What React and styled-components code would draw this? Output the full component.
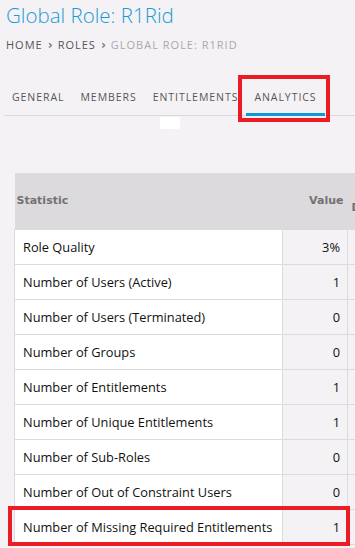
import React from 'react'
import styled, { createGlobalStyle } from 'styled-components'

const GlobalStyle = createGlobalStyle`
    html, body {
        margin: 0;
        padding: 0;
        background-color: #f5f2f5;
        overflow: hidden;
    }
    body {
        font-family: "Open Sans", "Liberation Sans", sans-serif;
    }
`;

const Page = styled.div`
    width: 355px;
    height: 548px;
    padding: 0 0 0 4px;
    box-sizing: border-box;
    overflow: hidden;
    background-color: #f5f2f5;
`;

const Title = styled.h1`
    margin: 0;
    padding: 0 0 0 2px;
    font-size: 20.5px;
    font-weight: 300;
    line-height: 30px;
    color: #1a9ad6;
`;

const Crumbs = styled.div`
    display: flex;
    align-items: center;
    gap: 5px;
    margin: 7px 0 0 2px;
    font-size: 11px;
    letter-spacing: 1px;
    line-height: 16px;
    text-transform: uppercase;
`;

const Crumb = styled.span`
    color: ${p => (p.$current ? '#aaa8aa' : '#555')};
`;

const Chevron = styled.span`
    color: #777;
    font-family: "DejaVu Sans", sans-serif;
    font-weight: 700;
    font-size: 12px;
    letter-spacing: 0;
`;

const Tabs = styled.div`
    display: flex;
    margin-top: 25px;
    border-bottom: 1px solid #dcd8dc;
`;

const Tab = styled.div`
    position: relative;
    padding: 3px 8px 0;
    height: 38px;
    display: flex;
    align-items: center;
    font-size: 10.5px;
    letter-spacing: 0.95px;
    color: #555;
    text-transform: uppercase;
    border-bottom: 3px solid ${p => (p.$active ? '#0f98d8' : 'transparent')};
    margin-bottom: -1px;
    box-sizing: border-box;
`;

const TabMark = styled.div`
    position: absolute;
    left: -8px;
    right: -5px;
    top: -3px;
    bottom: -9px;
    border: 4px solid #ec1c24;
`;

const Blob = styled.div`
    width: 20px;
    height: 12px;
    margin: 1px 0 0 156px;
    background: #fff;
    border-radius: 2px;
`;

const TableWrap = styled.div`
    position: relative;
    margin: 44px 0 0 10px;
`;

const Table = styled.table`
    border-collapse: collapse;
    width: 460px;
    table-layout: fixed;
    font-size: 12.8px;
    color: #111;
`;

const HeadRow = styled.tr`
    height: 56px;
`;

const Head = styled.th`
    padding: ${p => (p.$low ? '14px 4px 0' : p.$right ? '0 4px' : '0 2px')};
    background-color: #dcdadc;
    color: #737173;
    font-family: "DejaVu Sans", Verdana, sans-serif;
    font-size: 11px;
    font-weight: 700;
    text-align: ${p => (p.$right ? 'right' : 'left')};
    vertical-align: middle;
    white-space: nowrap;
`;

const Cell = styled.td`
    height: 34px;
    padding: 0 ${p => (p.$right ? '7px' : '8px')};
    border: 1px solid #dddadd;
    background-color: ${p => (p.$shade ? '#f5f2f5' : '#fff')};
    text-align: ${p => (p.$right ? 'right' : 'left')};
    white-space: nowrap;
`;

const RowMark = styled.div`
    position: absolute;
    left: -6px;
    top: 333px;
    width: 342px;
    height: 40px;
    border: 4px solid #ec1c24;
    box-sizing: border-box;
    pointer-events: none;
`;

const stats = [
    ['Role Quality', '3%'],
    ['Number of Users (Active)', '1'],
    ['Number of Users (Terminated)', '0'],
    ['Number of Groups', '0'],
    ['Number of Entitlements', '1'],
    ['Number of Unique Entitlements', '1'],
    ['Number of Sub-Roles', '0'],
    ['Number of Out of Constraint Users', '0'],
    ['Number of Missing Required Entitlements', '1'],
];

const tabs = ['General', 'Members', 'Entitlements', 'Analytics'];

const App = () => {
    return (
        <Page>
            <GlobalStyle />
            <Title>Global Role: R1Rid</Title>
            <Crumbs>
                <Crumb>Home</Crumb>
                <Chevron>›</Chevron>
                <Crumb>Roles</Crumb>
                <Chevron>›</Chevron>
                <Crumb $current>Global Role: R1Rid</Crumb>
            </Crumbs>

            <Tabs>
                {tabs.map(t => (
                    <Tab key={t} $active={t === 'Analytics'}>
                        {t}
                        {t === 'Analytics' && <TabMark />}
                    </Tab>
                ))}
            </Tabs>
            <Blob />

            <TableWrap>
                <Table>
                    <colgroup>
                        <col style={{ width: 268 }} />
                        <col style={{ width: 65 }} />
                        <col style={{ width: 127 }} />
                    </colgroup>
                    <thead>
                        <HeadRow>
                            <Head>Statistic</Head>
                            <Head $right>Value</Head>
                            <Head $low>Description</Head>
                        </HeadRow>
                    </thead>
                    <tbody>
                        {stats.map(([name, value]) => (
                            <tr key={name}>
                                <Cell>{name}</Cell>
                                <Cell $right $shade>{value}</Cell>
                                <Cell $shade />
                            </tr>
                        ))}
                    </tbody>
                </Table>
                <RowMark />
            </TableWrap>
        </Page>
    )
}

export default App
